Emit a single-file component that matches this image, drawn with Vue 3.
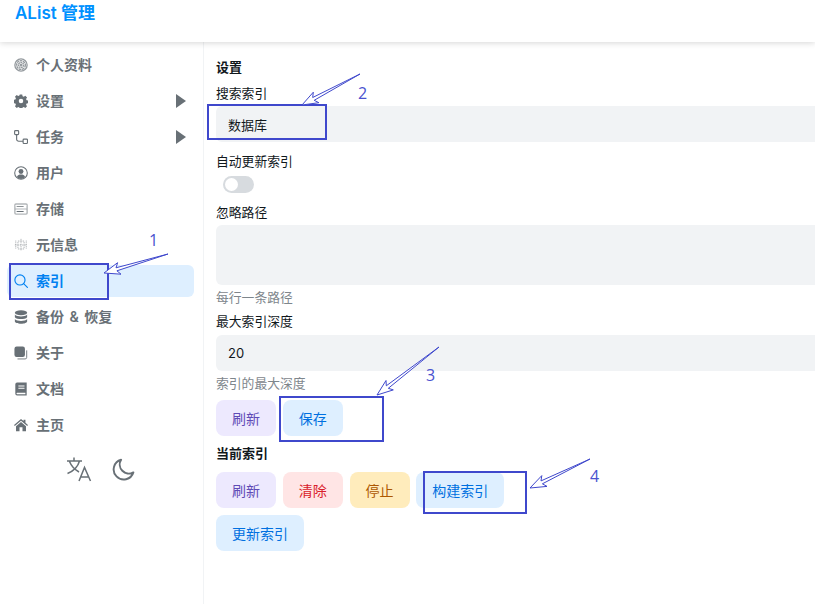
<script setup>
const menu = [
  { label: '个人资料', icon: 'finger' },
  { label: '设置', icon: 'gear', caret: true },
  { label: '任务', icon: 'route', caret: true },
  { label: '用户', icon: 'user' },
  { label: '存储', icon: 'storage' },
  { label: '元信息', icon: 'meta' },
  { label: '索引', icon: 'search', active: true },
  { label: '备份 & 恢复', icon: 'db' },
  { label: '关于', icon: 'copy' },
  { label: '文档', icon: 'book' },
  { label: '主页', icon: 'home' }
]

const boxes = [
  { x: 10, y: 264, w: 98, h: 35 },
  { x: 208, y: 105, w: 118, h: 34 },
  { x: 280, y: 397, w: 103, h: 44 },
  { x: 424, y: 472, w: 102, h: 41 }
]

const nums = [
  { t: '1', x: 149, y: 246 },
  { t: '2', x: 358, y: 99 },
  { t: '3', x: 426, y: 381 },
  { t: '4', x: 590, y: 482 }
]

function arrow(tx, ty, hx, hy) {
  const l = Math.hypot(hx - tx, hy - ty)
  const dx = (hx - tx) / l
  const dy = (hy - ty) / l
  const nx = -dy
  const ny = dx
  const p = (a, b) => `${(hx - dx * a + nx * b).toFixed(1)} ${(hy - dy * a + ny * b).toFixed(1)}`
  return `M${tx} ${ty}L${p(13, 1.6)}L${p(16, 6)}L${hx} ${hy}L${p(16, -6)}L${p(13, -1.6)}Z`
}

const arrows = [
  arrow(168, 254, 104, 273),
  arrow(360, 74, 302, 105),
  arrow(439, 347, 377, 395),
  arrow(590, 459, 530, 488)
]
</script>

<template>
  <div class="page">
    <header class="top">
      <span class="brand">AList 管理</span>
    </header>
    <div class="body">
      <aside class="side">
        <nav class="menu">
          <a v-for="m in menu" :key="m.label" class="item" :class="{ active: m.active }">
            <svg class="ico" viewBox="0 0 16 16" fill="currentColor">
              <g v-if="m.icon === 'finger'" fill="none" stroke="currentColor" stroke-width="1.500" opacity=".7">
                <circle cx="8" cy="8" r="7" />
                <circle cx="8" cy="8" r="5" stroke-dasharray="3 .6" />
                <circle cx="8" cy="8" r="3" stroke-dasharray="2 .6" />
                <circle cx="8" cy="8" r="1" />
              </g>
              <path v-else-if="m.icon === 'gear'" fill-rule="evenodd" d="M6.600 .6h2.800l.4 2 1.400.6 1.700-1.100 2 2-1.100 1.700.6 1.400 2 .4v2.800l-2 .4-.6 1.400 1.100 1.700-2 2-1.700-1.100-1.400.6-.4 2H6.600l-.4-2-1.400-.6-1.700 1.100-2-2 1.100-1.700-.6-1.400-2-.4V6.600l2-.4.6-1.400-1.100-1.700 2-2 1.700 1.100 1.400-.6zM8 5.400a2.600 2.600 0 1 0 0 5.200a2.600 2.600 0 0 0 0-5.200z" />
              <g v-else-if="m.icon === 'route'" fill="none" stroke="currentColor" stroke-width="1.300">
                <rect x=".7" y=".7" width="4.600" height="4.600" rx="1" />
                <rect x="10.400" y="10.400" width="5" height="5" rx="1" />
                <path d="M3 5.300v5.200a2.400 2.400 0 0 0 2.400 2.400h5" />
              </g>
              <g v-else-if="m.icon === 'user'">
                <circle cx="8" cy="8" r="7.200" fill="none" stroke="currentColor" stroke-width="1.200" />
                <circle cx="8" cy="6.300" r="2.800" />
                <path d="M3.300 12.600C4 10.500 6 9.800 8 9.800s4 .7 4.700 2.800A6.600 6.600 0 0 1 8 14.800a6.600 6.600 0 0 1-4.700-2.200z" />
              </g>
              <g v-else-if="m.icon === 'storage'">
                <rect x=".2" y="1.500" width="15.600" height="13" rx="2" opacity=".5" />
                <rect x="1.800" y="3" width="12.400" height="4.500" rx=".6" fill="#fff" />
                <rect x="1.800" y="8.500" width="12.400" height="4.500" rx=".6" fill="#fff" />
                <path d="M3 4.800h8v1H3zM3 10.300h8v1H3z" />
              </g>
              <g v-else-if="m.icon === 'meta'" fill="none" stroke="currentColor" stroke-width="1" stroke-dasharray="1 1" opacity=".7">
                <rect x="4.500" y="3.500" width="7" height="9" />
                <path d="M8 1v14M2 3v10M14 3v10M1 8h14" />
              </g>
              <g v-else-if="m.icon === 'search'" fill="none" stroke="currentColor" stroke-width="1.300">
                <circle cx="6.800" cy="6.800" r="5.800" />
                <path d="M11 11L15.300 15.300" stroke-linecap="round" />
              </g>
              <g v-else-if="m.icon === 'db'">
                <ellipse cx="8" cy="3.200" rx="7" ry="2.900" />
                <path d="M1 5.200C2 7 5.500 7.400 8 7.400s6-.4 7-2.200v3C14 10 10.500 10.400 8 10.400S2 10 1 8.200z" />
                <path d="M1 10.300c1 1.800 4.500 2.200 7 2.200s6-.4 7-2.200v2.700c0 1.400-3.200 2.600-7 2.600s-7-1.200-7-2.600z" />
              </g>
              <g v-else-if="m.icon === 'copy'">
                <rect x=".5" y=".5" width="12" height="12" rx="2.500" />
                <path d="M14.500 5v8a1.800 1.800 0 0 1-1.800 1.800H4" fill="none" stroke="currentColor" stroke-width="1" />
              </g>
              <path v-else-if="m.icon === 'book'" fill-rule="evenodd" d="M3.500 .5H14.500V15.500H3.500A2 2 0 0 1 1.500 13.500V2.500A2 2 0 0 1 3.500 .5zM5 4v1.200h7V4zm0 2.500v1.200h7V6.500zM3.500 12.300a.9.9 0 0 0 0 1.700h9.500v-1.700z" />
              <path v-else-if="m.icon === 'home'" d="M8 1l2.900 2.500V2h2.200v3.400L16 8l-.9 1L8 3.100 .9 9 0 8zM8 4.600l5.700 4.700V15H9.700v-4.300H6.300V15H2.300V9.300z" />
            </svg>
            <span class="label">{{ m.label }}</span>
            <svg v-if="m.caret" class="caret" viewBox="0 0 10 14" fill="currentColor"><path d="M0 0l10 7-10 7z" /></svg>
          </a>
        </nav>
        <div class="tools">
          <svg class="lang" viewBox="0 0 26 26" fill="none" stroke="currentColor" stroke-width="1.500">
            <path d="M1 5h15M8 1.500V5M13.500 5C12 10.500 7.500 15 1.500 17.500M3.500 5.500C5.500 10.500 8.500 13.500 13 16" />
            <path d="M13 25l5.500-13.500L24.500 25M14.800 21h7.800" />
          </svg>
          <svg class="moon" viewBox="0 0 24 24" fill="none" stroke="currentColor" stroke-width="2">
            <path d="M9.500 1.800A10.500 10.500 0 1 0 22.300 15 9.500 9.500 0 0 1 9.500 1.800z" stroke-linejoin="round" />
          </svg>
        </div>
      </aside>

      <main class="main">
        <h2 class="title">设置</h2>
        <div class="label-row first">搜索索引</div>
        <div class="input select">数据库</div>
        <div class="label-row gap10">自动更新索引</div>
        <div class="switch"><span class="knob"></span></div>
        <div class="label-row gap10">忽略路径</div>
        <div class="area"></div>
        <div class="hint">每行一条路径</div>
        <div class="label-row tight">最大索引深度</div>
        <div class="input deep">20</div>
        <div class="hint">索引的最大深度</div>
        <div class="btns one">
          <button class="btn purple">刷新</button>
          <button class="btn blue">保存</button>
        </div>
        <h3 class="sub">当前索引</h3>
        <div class="btns two">
          <button class="btn purple">刷新</button>
          <button class="btn red">清除</button>
          <button class="btn yellow">停止</button>
          <button class="btn blue">构建索引</button>
          <button class="btn blue">更新索引</button>
        </div>
      </main>
    </div>

    <svg class="marks" viewBox="0 0 815 604" fill="none">
      <rect v-for="(b, i) in boxes" :key="i" :x="b.x" :y="b.y" :width="b.w" :height="b.h" stroke="#3f48cc" stroke-width="2" />
      <path v-for="(d, i) in arrows" :key="'a' + i" :d="d" fill="#fff" stroke="#3f48cc" stroke-width="1" />
      <text v-for="n in nums" :key="n.t" :x="n.x" :y="n.y" class="num">{{ n.t }}</text>
    </svg>
  </div>
</template>

<style>
html, body { margin: 0; background: #fff; overflow: hidden; }
</style>

<style scoped>
.page {
  position: relative;
  width: 815px;
  height: 604px;
  overflow: hidden;
  font-family: Inter, "Noto Sans CJK SC", sans-serif;
  font-size: 14px;
  color: #11181c;
  background: #fff;
}
.top {
  position: relative;
  z-index: 1;
  height: 42px;
  box-shadow: 0 1px 6px rgba(0, 0, 0, .16);
  box-sizing: border-box;
  padding: 0 15px;
}
.brand {
  display: block;
  font-size: 17px;
  font-weight: 600;
  line-height: 26px;
  color: #0091ff;
}
.body { display: flex; height: 562px; }
.side {
  flex: none;
  width: 204px;
  box-sizing: border-box;
  border-right: 1px solid #f1f3f5;
  padding: 7px 9px 0 7px;
}
.menu { display: flex; flex-direction: column; gap: 4px; }
.item {
  display: flex;
  align-items: center;
  height: 32px;
  padding-left: 7px;
  border-radius: 6px;
  color: #687076;
  font-weight: 600;
  font-size: 14px;
}
.item.active { background: #deefff; color: #0081f1; }
.ico { width: 14px; height: 14px; flex: none; margin-right: 8px; }
.label { flex: 1; white-space: nowrap; word-spacing: 2px; padding-bottom: 2px; }
.caret { width: 10px; height: 14px; flex: none; margin-right: 8px; }
.tools {
  display: flex;
  align-items: center;
  justify-content: center;
  gap: 20px;
  margin-top: 15px;
  color: #687076;
}
.lang { width: 26px; height: 26px; }
.moon { width: 23px; height: 23px; }
.main { flex: 1; min-width: 0; padding: 16px 0 0 12px; }
.title { margin: 0; padding-bottom: 2px; font-size: 13px; font-weight: 700; line-height: 18px; }
.label-row { font-size: 12.8px; line-height: 20px; }
.first { margin-top: 6px; }
.gap10 { margin-top: 10px; }
.tight { margin-top: 4px; }
.input {
  box-sizing: border-box;
  height: 36px;
  padding-left: 12px;
  line-height: 36px;
  font-size: 13px;
  background: #f1f3f5;
  border-radius: 6px 0 0 6px;
}
.select { margin-top: 2px; line-height: 38px; }
.deep { margin-top: 3px; }
.switch {
  position: relative;
  width: 31px;
  height: 17px;
  margin: 4px 0 0 7px;
  border-radius: 9px;
  background: #d7dbdf;
}
.knob {
  position: absolute;
  left: 2px;
  top: 2px;
  width: 13px;
  height: 13px;
  border-radius: 50%;
  background: #fff;
}
.area {
  height: 60px;
  margin-top: 2px;
  background: #f1f3f5;
  border-radius: 6px 0 0 6px;
}
.hint { margin-top: 3px; font-size: 12.8px; line-height: 20px; color: #7e868c; }
.btns { display: flex; flex-wrap: wrap; gap: 7px 6.75px; }
.one { margin-top: 6px; }
.two { margin-top: 8px; max-width: 300px; }
.sub { margin: 8px 0 0; padding-bottom: 2px; font-size: 13px; font-weight: 700; line-height: 18px; }
.btn {
  height: 36px;
  padding: 0 16px;
  border: 0;
  border-radius: 8px;
  font: inherit;
  font-size: 14px;
}
.purple { background: #ede9fe; color: #5f4bb6; }
.blue { background: #deefff; color: #0070e0; }
.red { background: #ffe5e5; color: #d9202a; }
.yellow { background: #ffecbc; color: #ad5700; }
.marks { position: absolute; left: 0; top: 0; width: 815px; height: 604px; pointer-events: none; }
.num { font-family: "Open Sans", sans-serif; font-size: 16px; fill: #4a52cf; }
</style>
